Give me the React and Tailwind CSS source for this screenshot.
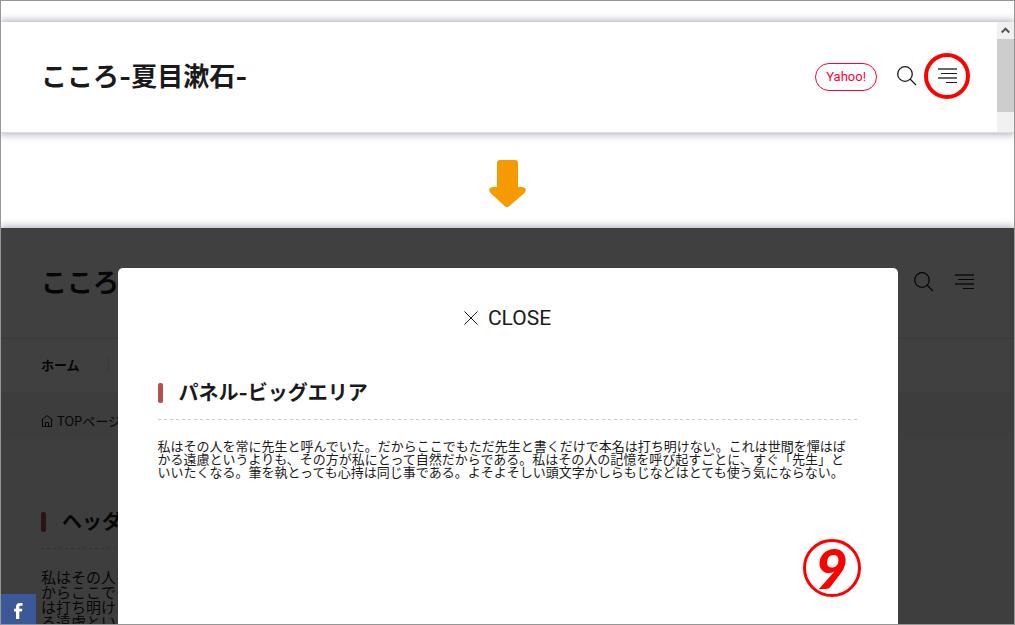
const BODY_TEXT =
  "私はその人を常に先生と呼んでいた。だからここでもただ先生と書くだけで本名は打ち明けない。これは世間を憚はばかる遠慮というよりも、その方が私にとって自然だからである。私はその人の記憶を呼び起すごとに、すぐ「先生」といいたくなる。筆を執とっても心持は同じ事である。よそよそしい頭文字かしらもじなどはとても使う気にならない。";

function SearchIcon() {
  return (
    <svg width="20" height="20" viewBox="0 0 20 20" fill="none" stroke="currentColor" strokeWidth="1.3">
      <circle cx="8" cy="8" r="7.3" />
      <path d="M13 13l6 6" />
    </svg>
  );
}

function MenuIcon() {
  return (
    <svg width="20" height="20" viewBox="0 0 20 20" fill="currentColor">
      <path fillOpacity=".65" d="M1 2h19v2H1zM1 11h19v2H1z" />
      <path d="M4 7h16v1H4zM9 16h11v1H9z" />
    </svg>
  );
}

function HomeIcon() {
  return (
    <svg width="12" height="12" viewBox="0 0 12 12" fill="none" stroke="currentColor">
      <path d="M.5 5L6 .6 11.5 5M1.500 4.500v7h9v-7M4.500 11.500v-4h3v4" />
    </svg>
  );
}

function SiteTitle() {
  return (
    <h1 className="pt-0.5 font-['Inter','Noto_Sans_CJK_JP',sans-serif] text-[26px] leading-8 font-bold whitespace-nowrap">
      こころ-夏目漱石-
    </h1>
  );
}

function SectionHeading({ children }) {
  return (
    <div>
      <div className="flex items-center pb-3">
        <span className="h-5 w-[5px] rounded-xs bg-[#b55050]" />
        <h2 className="ml-4 font-['Inter','Noto_Sans_CJK_JP',sans-serif] text-xl leading-7 font-bold whitespace-nowrap">
          {children}
        </h2>
      </div>
      <div className="h-px bg-[repeating-linear-gradient(90deg,#ccc_0_3px,transparent_3px_6px)]" />
    </div>
  );
}

function Scrollbar() {
  return (
    <div className="w-[17px] shrink-0 bg-[#f1f1f1]">
      <div className="flex h-[17px] items-center justify-center">
        <svg width="9" height="7" viewBox="0 0 9 7" fill="none" stroke="#555" strokeWidth="2">
          <path d="M.7 5.500L4.500 1.700l3.800 3.800" />
        </svg>
      </div>
      <div className="h-2/3 bg-[#cdcdcd]" />
    </div>
  );
}

function HeaderPreview() {
  return (
    <div className="mt-[21px] flex shrink-0 border-b border-[#ddd] bg-white shadow-[0_0_8px_1px_#a4a4ba]">
      <header className="flex h-[110px] flex-1 items-center justify-between px-10 pb-0.5">
        <SiteTitle />
        <div className="flex items-center gap-5">
          <a
            href="#yahoo"
            className="mt-0.5 rounded-full border border-[#ff0033] px-2.5 py-1 font-['Roboto',sans-serif] text-[13px] leading-[18px] text-[#ff0033]"
          >
            Yahoo!
          </a>
          <button type="button" aria-label="検索">
            <SearchIcon />
          </button>
          <button type="button" aria-label="メニュー" className="relative">
            <MenuIcon />
            <span className="absolute -inset-[13px] rounded-full border-4 border-[#ff0000]" />
          </button>
        </div>
      </header>
      <Scrollbar />
    </div>
  );
}

function Page() {
  return (
    <div className="bg-white">
      <header className="flex h-[111px] items-center justify-between border-b border-[#e2e2e2] px-10 pb-0.5">
        <SiteTitle />
        <div className="flex items-center gap-5">
          <button type="button" aria-label="検索">
            <SearchIcon />
          </button>
          <button type="button" aria-label="メニュー">
            <MenuIcon />
          </button>
        </div>
      </header>
      <nav className="flex h-[53px] items-center px-10 pb-0.5 text-[13px] font-bold">
        <a href="#home" className="border-r border-[#dedede] pr-7 leading-4">
          ホーム
        </a>
      </nav>
      <div className="flex h-[45px] items-center gap-1 bg-[#f2f2f2] px-10 pt-3 text-[13px]">
        <HomeIcon />
        <a href="#top" className="leading-5">
          TOPページ
        </a>
      </div>
      <main className="bg-[#f8f8f8] px-10 pt-[71px]">
        <section className="w-[30%]">
          <SectionHeading>ヘッダー</SectionHeading>
          <p className="mt-5 text-[15px] leading-[15px]">{BODY_TEXT}</p>
        </section>
      </main>
    </div>
  );
}

function Panel() {
  return (
    <div
      role="dialog"
      aria-label="パネル"
      className="flex w-[780px] max-w-full flex-col rounded-t-[5px] bg-white px-10 pt-[35px]"
    >
      <button
        type="button"
        className="flex items-center justify-center gap-2.5 font-['Roboto',sans-serif] text-[21px] leading-[30px]"
      >
        <svg width="14" height="14" viewBox="0 0 14 14" fill="none" stroke="currentColor">
          <path d="M.5.5l13 13M13.500.5l-13 13" />
        </svg>
        CLOSE
      </button>
      <div className="mt-[46px]">
        <SectionHeading>パネル-ビッグエリア</SectionHeading>
      </div>
      <p className="mt-[19px] pr-2 text-[13px] leading-[13px]">{BODY_TEXT}</p>
      <div className="mt-auto mr-[-3px] mb-[27px] flex size-[58px] items-center justify-center self-end rounded-full border-3 border-[#ff0000] font-['Lato',sans-serif] text-[56px] leading-none font-black text-[#ff0000] italic">
        9
      </div>
    </div>
  );
}

export default function App() {
  return (
    <div
      lang="ja"
      className="flex h-screen flex-col overflow-hidden border border-[#969696] bg-white font-['Noto_Sans_CJK_JP',sans-serif] text-[#1a1a1a]"
    >
      <HeaderPreview />
      <div className="flex shrink-0 justify-center pt-[27px] pb-[21px]">
        <svg width="38" height="47" viewBox="0 0 38 47" fill="#f59a00">
          <path d="M11 0h15q3 0 3 3v24h4q6 1 2.500 6L21 45.500q-3 3-6 0L1.500 33Q-2 28 4 27h4V3q0-3 3-3z" />
        </svg>
      </div>
      <div className="relative min-h-0 flex-1 shadow-[0_0_8px_1px_#a4a4ba]">
        <div className="h-full overflow-hidden">
          <Page />
        </div>
        <div className="absolute inset-0 flex justify-center bg-black/75 pt-10">
          <Panel />
        </div>
        <a
          href="#facebook"
          aria-label="Facebook"
          className="absolute bottom-0 left-0 flex h-[30px] w-[35px] items-center justify-center bg-[#3b5998] pt-1 text-white"
        >
          <svg width="9" height="16" viewBox="0 0 9 16" fill="currentColor">
            <path d="M2 16V8.500H0V5.700h2V4Q2 0 6 0h2.500v2.800H6.600Q5.300 2.800 5.300 4v1.700h3L8 8.500H5.300V16z" />
          </svg>
        </a>
      </div>
    </div>
  );
}
